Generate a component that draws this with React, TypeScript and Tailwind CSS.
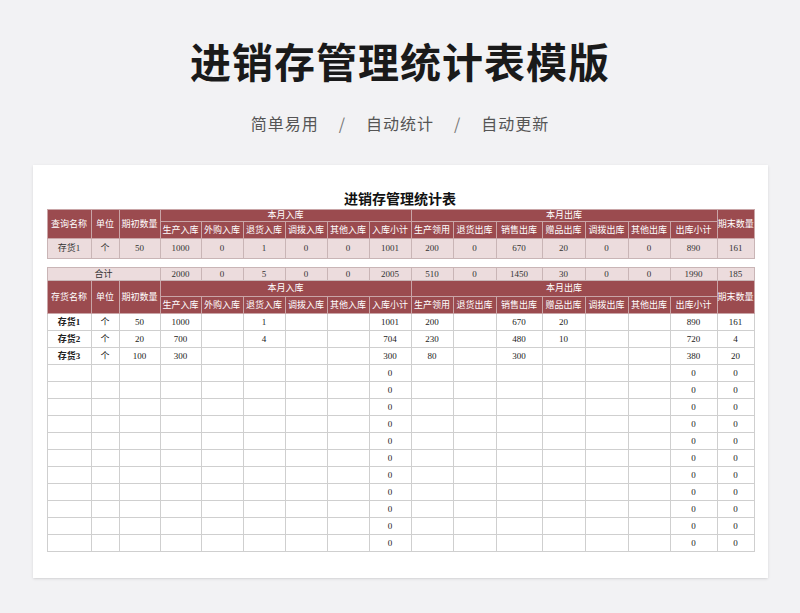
import React from 'react';

const widths = [44, 28, 41, 41, 42, 42, 42, 42, 42, 42, 43, 46, 43, 43, 42, 47, 37];
const inCols = ['生产入库', '外购入库', '退货入库', '调拨入库', '其他入库', '入库小计'];
const outCols = ['生产领用', '退货出库', '销售出库', '赠品出库', '调拨出库', '其他出库', '出库小计'];

const font = { fontFamily: '"Liberation Serif", "Noto Sans CJK SC", serif' };

const hd = 'border border-[#c9a5a7] bg-[#9b4b4f] text-white font-normal text-center p-0';
const cell = 'border border-[#cfcfcf] text-center p-0 text-[#222]';
const pink = 'border border-[#c9b5b6] bg-[#ecdcdd] text-center p-0 text-[#333]';

function Cols() {
  return (
    <colgroup>
      {widths.map((w, i) => (
        <col key={i} style={{ width: w }} />
      ))}
    </colgroup>
  );
}

function Header({ first, top }: { first: string; top: string }) {
  return (
    <>
      <tr className={top}>
        <th rowSpan={2} className={hd}>{first}</th>
        <th rowSpan={2} className={hd}>单位</th>
        <th rowSpan={2} className={hd}>期初数量</th>
        <th colSpan={6} className={hd}>本月入库</th>
        <th colSpan={7} className={hd}>本月出库</th>
        <th rowSpan={2} className={hd}>期末数量</th>
      </tr>
      <tr className="h-[17px]">
        {[...inCols, ...outCols].map((c) => (
          <th key={c} className={hd}>{c}</th>
        ))}
      </tr>
    </>
  );
}

const rows: (string | number)[][] = [
  ['存货1', '个', 50, 1000, '', 1, '', '', 1001, 200, '', 670, 20, '', '', 890, 161],
  ['存货2', '个', 20, 700, '', 4, '', '', 704, 230, '', 480, 10, '', '', 720, 4],
  ['存货3', '个', 100, 300, '', '', '', '', 300, 80, '', 300, '', '', '', 380, 20],
];
for (let i = 0; i < 11; i++) {
  rows.push(['', '', '', '', '', '', '', '', 0, '', '', '', '', '', '', 0, 0]);
}

export default function App() {
  return (
    <div className="w-[800px] h-[613px] bg-[#f2f2f4] flex flex-col items-center" style={{ fontFamily: '"Noto Sans CJK SC", sans-serif' }}>
      <h1 className="mt-[34px] text-[41px] leading-[52px] font-bold text-[#1a1a1a] tracking-[1px]">进销存管理统计表模版</h1>
      <div className="mt-[25px] flex items-center gap-[20px] text-[16px] text-[#555] tracking-[1px]">
        <span>简单易用</span>
        <span className="text-[#777]">/</span>
        <span>自动统计</span>
        <span className="text-[#777]">/</span>
        <span>自动更新</span>
      </div>
      <div className="mt-[30px] w-[735px] h-[413px] bg-white shadow-sm pl-[14px] pt-[22px]" style={font}>
        <div className="w-[707px] text-center text-[14px] font-bold text-[#111] leading-[22px]" style={{ fontFamily: '"Noto Sans CJK SC", sans-serif' }}>进销存管理统计表</div>
        <table className="table-fixed border-collapse w-[707px] text-[9px] leading-none">
          <Cols />
          <tbody>
            <Header first="查询名称" top="h-[12px]" />
            <tr className="h-[20px]">
              {['存货1', '个', 50, 1000, 0, 1, 0, 0, 1001, 200, 0, 670, 20, 0, 0, 890, 161].map((v, i) => (
                <td key={i} className={pink}>{v}</td>
              ))}
            </tr>
          </tbody>
        </table>
        <table className="table-fixed border-collapse w-[707px] text-[9px] leading-none mt-[8px]">
          <Cols />
          <tbody>
            <tr className="h-[13px]">
              <td colSpan={3} className={pink}>合计</td>
              {[2000, 0, 5, 0, 0, 2005, 510, 0, 1450, 30, 0, 0, 1990, 185].map((v, i) => (
                <td key={i} className={pink}>{v}</td>
              ))}
            </tr>
            <Header first="存货名称" top="h-[16px]" />
            {rows.map((r, ri) => (
              <tr key={ri} className="h-[17px]">
                {r.map((v, i) => (
                  <td key={i} className={`${cell} ${i === 0 ? 'font-bold' : ''}`}>{v}</td>
                ))}
              </tr>
            ))}
          </tbody>
        </table>
      </div>
    </div>
  );
}
